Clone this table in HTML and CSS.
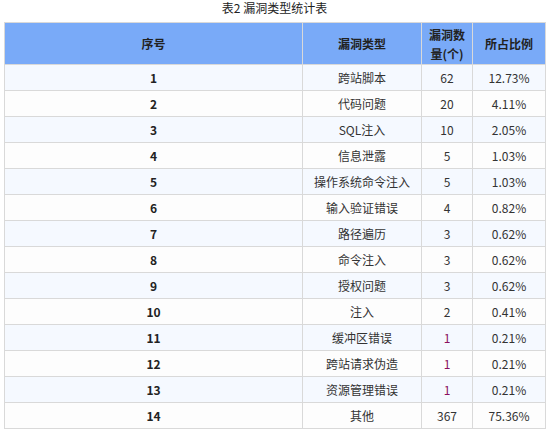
FILE: index.html
```html
<!DOCTYPE html>
<html lang="zh">
<head>
<meta charset="utf-8">
<link rel="stylesheet" href="styles.css">
</head>
<body>
<div class="title">表2 漏洞类型统计表</div>
<table class="stats">
<colgroup><col class="c1"><col class="c2"><col class="c3"><col class="c4"></colgroup>
<thead>
<tr><th>序号</th><th>漏洞类型</th><th class="narrow">漏洞数量(个)</th><th>所占比例</th></tr>
</thead>
<tbody>
<tr><td class="idx">1</td><td>跨站脚本</td><td>62</td><td>12.73%</td></tr>
<tr><td class="idx">2</td><td>代码问题</td><td>20</td><td>4.11%</td></tr>
<tr><td class="idx">3</td><td>SQL注入</td><td>10</td><td>2.05%</td></tr>
<tr><td class="idx">4</td><td>信息泄露</td><td>5</td><td>1.03%</td></tr>
<tr><td class="idx">5</td><td>操作系统命令注入</td><td>5</td><td>1.03%</td></tr>
<tr><td class="idx">6</td><td>输入验证错误</td><td>4</td><td>0.82%</td></tr>
<tr><td class="idx">7</td><td>路径遍历</td><td>3</td><td>0.62%</td></tr>
<tr><td class="idx">8</td><td>命令注入</td><td>3</td><td>0.62%</td></tr>
<tr><td class="idx">9</td><td>授权问题</td><td>3</td><td>0.62%</td></tr>
<tr><td class="idx">10</td><td>注入</td><td>2</td><td>0.41%</td></tr>
<tr><td class="idx">11</td><td>缓冲区错误</td><td class="red">1</td><td>0.21%</td></tr>
<tr><td class="idx">12</td><td>跨站请求伪造</td><td class="red">1</td><td>0.21%</td></tr>
<tr><td class="idx">13</td><td>资源管理错误</td><td class="red">1</td><td>0.21%</td></tr>
<tr><td class="idx">14</td><td>其他</td><td>367</td><td>75.36%</td></tr>
</tbody>
</table>
</body>
</html>
```
FILE: styles.css
```css
html, body {
  margin: 0;
  padding: 0;
  background: #ffffff;
}
body {
  padding: 0 4px;
  font-family: "Noto Sans CJK SC", "Noto Sans", sans-serif;
  font-size: 12px;
  color: #333333;
}
.title {
  height: 22px;
  line-height: 16px;
  text-align: center;
  font-size: 12px;
  color: #222222;
}
.stats {
  width: 541px;
  border-collapse: collapse;
  table-layout: fixed;
}
.c1 { width: 298px; }
.c2 { width: 119px; }
.c3 { width: 51px; }
.c4 { width: 73px; }
.stats th, .stats td {
  border: 1px solid #d9d9d9;
  text-align: center;
  padding: 0;
}
.stats th {
  background: #79aaf8;
  height: 41px;
  font-weight: bold;
  color: #222222;
  line-height: 19px;
}
.stats th.narrow {
  padding: 0 6px;
}
.stats td {
  height: 25px;
  line-height: 16px;
}
.stats tbody tr:nth-child(odd) td { background: #f5f9ff; }
.stats tbody tr:nth-child(even) td { background: #fdfdfd; }
.stats td.idx { font-weight: bold; color: #222222; }
.stats td.red { color: #8a1060; }
```
